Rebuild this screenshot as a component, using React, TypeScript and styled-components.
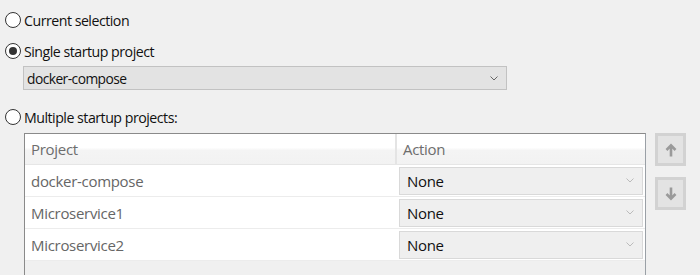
import React from "react";
import styled, { createGlobalStyle } from "styled-components";

const Global = createGlobalStyle`
  html, body { margin: 0; padding: 0; background: #f0f0f0; overflow: hidden; height: 275px; }
  body { font-family: "Open Sans", "Noto Sans", sans-serif; color: #111; }
`;

const Page = styled.div`
  width: 700px;
  padding: 11px 0 0 5px;
  box-sizing: border-box;
  display: flex;
  flex-direction: column;
  & > * { flex-shrink: 0; }
`;

const RadioRow = styled.label<{ $mt?: number }>`
  display: flex;
  align-items: center;
  gap: 3px;
  height: 18px;
  margin-top: ${(p) => p.$mt ?? 0}px;
  font-size: 14.2px;
  letter-spacing: -0.5px;
  color: #111;
  white-space: nowrap;
`;

const RadioCircle = styled.span<{ $checked?: boolean }>`
  width: 16px;
  height: 16px;
  box-sizing: border-box;
  border: 1px solid #333;
  border-radius: 50%;
  background: #fff;
  display: flex;
  align-items: center;
  justify-content: center;
  &::after {
    content: "";
    display: ${(p) => (p.$checked ? "block" : "none")};
    width: 8px;
    height: 8px;
    border-radius: 50%;
    background: #333;
  }
`;

const Combo = styled.div`
  margin: 6px 0 0 18px;
  width: 484px;
  height: 24px;
  box-sizing: border-box;
  border: 1px solid #c2c2c2;
  background: #e3e3e3;
  display: flex;
  align-items: center;
  justify-content: space-between;
  padding: 0 8px 0 3px;
  font-size: 13.8px;
  letter-spacing: -0.55px;
  color: #111;
`;

const Chevron = ({ color }: { color: string }) => (
  <svg width="8" height="5" viewBox="0 0 8 5">
    <path d="M0.5 0.5 L4 4 L7.5 0.5" fill="none" stroke={color} strokeWidth="1" />
  </svg>
);

const Lower = styled.div`
  display: flex;
  margin: 7px 0 0 19px;
  gap: 9px;
`;

const Table = styled.div`
  width: 622px;
  height: 160px;
  flex-shrink: 0;
  box-sizing: border-box;
  border: 1px solid #8a8a8a;
  border-right-color: #9aa0a6;
  background: #f0f0f0;
  display: flex;
  flex-direction: column;
  & > * { flex-shrink: 0; }
`;

const HeaderRow = styled.div`
  display: grid;
  grid-template-columns: 372px 1fr;
  height: 30px;
  background: linear-gradient(#ffffff 0%, #ffffff 45%, #f4f4f4 55%, #f2f2f2 100%);
  border-bottom: 1px solid #e6e6e6;
`;

const HeaderCell = styled.div<{ $divider?: boolean }>`
  display: flex;
  align-items: center;
  padding-left: 6px;
  font-size: 15px;
  letter-spacing: -0.3px;
  color: #6d6d6d;
  border-right: ${(p) => (p.$divider ? "2px solid #e4e4e4" : "none")};
`;

const Row = styled.div`
  display: grid;
  grid-template-columns: 374px 1fr;
  height: 32px;
  box-sizing: border-box;
  background: #fff;
  border-bottom: 1px solid #ececec;
`;

const NameCell = styled.div`
  display: flex;
  align-items: center;
  padding-left: 6px;
  font-size: 15px;
  letter-spacing: -0.3px;
  color: #666;
`;

const ActionCell = styled.div`
  display: flex;
  align-items: center;
  padding: 0 2px 0 0;
`;

const ActionSelect = styled.div`
  flex: 1;
  height: 28px;
  box-sizing: border-box;
  border: 1px solid #d9d9d9;
  background: #efefef;
  display: flex;
  align-items: center;
  justify-content: space-between;
  padding: 0 8px 0 7px;
  font-size: 15px;
  letter-spacing: -0.3px;
  color: #111;
`;

const Side = styled.div`
  display: flex;
  flex-direction: column;
  gap: 11px;
`;

const MoveButton = styled.div`
  width: 31px;
  height: 33px;
  box-sizing: border-box;
  border: 3px solid #d2d2d2;
  background: #e3e3e3;
  display: flex;
  align-items: center;
  justify-content: center;
`;

const Arrow = ({ up }: { up?: boolean }) => (
  <svg width="12" height="14" viewBox="0 0 12 14" style={{ transform: up ? "none" : "rotate(180deg)" }}>
    <path d="M6 13.5 V2.8 M1.5 7 L6 2.4 L10.5 7" fill="none" stroke="#9a9a9a" strokeWidth="2.6" />
  </svg>
);

const projects = ["docker-compose", "Microservice1", "Microservice2"];

export default function App() {
  return (
    <Page>
      <Global />
      <RadioRow>
        <RadioCircle />
        Current selection
      </RadioRow>
      <RadioRow $mt={13}>
        <RadioCircle $checked />
        Single startup project
      </RadioRow>
      <Combo>
        docker-compose
        <Chevron color="#666" />
      </Combo>
      <RadioRow $mt={18}>
        <RadioCircle />
        Multiple startup projects:
      </RadioRow>
      <Lower>
        <Table>
          <HeaderRow>
            <HeaderCell $divider>Project</HeaderCell>
            <HeaderCell>Action</HeaderCell>
          </HeaderRow>
          {projects.map((p) => (
            <Row key={p}>
              <NameCell>{p}</NameCell>
              <ActionCell>
                <ActionSelect>
                  None
                  <Chevron color="#bbb" />
                </ActionSelect>
              </ActionCell>
            </Row>
          ))}
        </Table>
        <Side>
          <MoveButton>
            <Arrow up />
          </MoveButton>
          <MoveButton>
            <Arrow />
          </MoveButton>
        </Side>
      </Lower>
    </Page>
  );
}
